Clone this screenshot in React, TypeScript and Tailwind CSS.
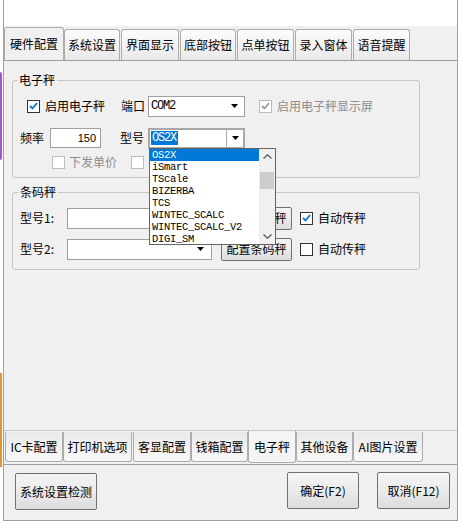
import React from "react";

const mono = "font-['Liberation_Mono',monospace] text-[12px] tracking-[-1.2px]";
const listMono = "font-['Liberation_Mono',monospace] text-[10.5px] tracking-[-0.3px]";

function Arrow() {
  return (
    <svg width="7" height="4" viewBox="0 0 7 4">
      <path d="M0 0h7L3.5 4z" fill="#000" />
    </svg>
  );
}

function Check({ checked, disabled }: { checked?: boolean; disabled?: boolean }) {
  return (
    <span
      className={`flex h-[13px] w-[13px] shrink-0 items-center justify-center border bg-white ${
        disabled ? "border-[#bcbcbc]" : "border-[#333333]"
      }`}
    >
      {checked && (
        <svg width="9" height="8" viewBox="0 0 9 8">
          <path
            d="M1 4l2.5 2.5L8 1"
            fill="none"
            stroke={disabled ? "#9a9a9a" : "#0078d7"}
            strokeWidth="1.8"
          />
        </svg>
      )}
    </span>
  );
}

function TopTab({ label, w, sel, ml }: { label: string; w: string; sel?: boolean; ml?: string }) {
  return (
    <div
      className={`${w} ${ml ?? ""} flex items-center justify-center rounded-t-[3px] border border-b-0 border-[#acacac] ${
        sel ? "h-[33px] bg-[#f0f0f0]" : "h-[31px] bg-gradient-to-b from-[#fcfcfc] to-[#e9e9e9]"
      }`}
    >
      {label}
    </div>
  );
}

function BottomTab({ label, w, sel, ml }: { label: string; w: string; sel?: boolean; ml?: string }) {
  return (
    <div
      className={`${w} ${ml ?? ""} flex items-center justify-center rounded-b-[3px] border border-t-0 border-[#acacac] ${
        sel ? "h-[32px] bg-[#f4f4f4]" : "mt-[1px] h-[30px] bg-gradient-to-t from-[#f8f8f8] to-[#e9e9e9]"
      }`}
    >
      {label}
    </div>
  );
}

function WinButton({ label, w, mt, ml }: { label: React.ReactNode; w: string; mt: string; ml: string }) {
  return (
    <div
      className={`${w} ${mt} ${ml} flex h-[37px] items-center justify-center rounded-[2px] border border-[#707070] bg-gradient-to-b from-[#f4f4f4] via-[#ebebeb] to-[#dcdcdc]`}
    >
      {label}
    </div>
  );
}

const models = ["OS2X", "iSmart", "TScale", "BIZERBA", "TCS", "WINTEC_SCALC", "WINTEC_SCALC_V2", "DIGI_SM"];

export default function App() {
  return (
    <div className="relative flex h-[524px] w-[461px] overflow-hidden bg-white font-['Noto_Sans_CJK_SC',sans-serif] text-[12px] leading-[16px] text-black">
      {/* desktop behind the window */}
      <div className="flex w-[3px] flex-col">
        <div className="h-[72px]" />
        <div className="h-[88px] w-[2px] rounded-r-[2px] bg-[#a456c6]" />
        <div className="h-[213px]" />
        <div className="h-[94px] w-[2px] bg-[#df9634]" />
      </div>

      <div className="flex h-[521px] w-[455px] flex-col border-x border-b border-[#a0a0a0] bg-[#f0f0f0]">
        <div className="h-[26px] bg-white" />

        {/* top tabs */}
        <div className="flex h-[34px] items-end">
          <TopTab label="硬件配置" w="w-[60px]" sel />
          <TopTab label="系统设置" w="w-[56px]" />
          <TopTab label="界面显示" w="w-[58px]" ml="ml-[1px]" />
          <TopTab label="底部按钮" w="w-[56px]" ml="ml-[1px]" />
          <TopTab label="点单按钮" w="w-[57px]" ml="ml-[1px]" />
          <TopTab label="录入窗体" w="w-[57px]" ml="ml-[1px]" />
          <TopTab label="语音提醒" w="w-[57px]" ml="ml-[1px]" />
        </div>

        {/* main page */}
        <div className="h-[371px] border-t border-b border-t-[#a0a0a0] border-b-[#c8c8c8] pl-[8px]">
          <fieldset className="mt-[11px] w-[408px] rounded-[3px] border border-[#c6c6c6] pb-[2px]">
            <legend className="ml-[4px] px-[2px] leading-[16px]">电子秤</legend>
            <div className="mt-[7px] flex h-[22px] items-center">
              <span className="ml-[14px]">
                <Check checked />
              </span>
              <span className="ml-[5px]">启用电子秤</span>
              <span className="ml-[16px]">端口</span>
              <div className={`ml-[3px] flex h-[21px] w-[97px] items-center justify-between border border-[#a0a0a0] bg-white pl-[2px] pr-[6px] ${mono}`}>
                <span>COM2</span>
                <Arrow />
              </div>
              <span className="ml-[14px]">
                <Check checked disabled />
              </span>
              <span className="ml-[5px] text-[#8d8d8d]">启用电子秤显示屏</span>
            </div>
            <div className="mt-[10px] flex h-[22px] items-center">
              <span className="ml-[7px]">频率</span>
              <div className="ml-[6px] flex h-[20px] w-[51px] items-center justify-end border border-[#a0a0a0] bg-white pr-[4px] font-['Liberation_Sans',sans-serif] text-[11px]">
                150
              </div>
              <span className="ml-[19px]">型号</span>
              <div className="relative ml-[4px] flex h-[21px] w-[97px] items-center border-2 border-[#a8a8a8] bg-white">
                <span className={`ml-[1px] bg-[#0078d7] pl-[1px] pr-[2px] leading-[14px] text-white ${mono}`}>OS2X</span>
                <span className="ml-auto flex h-full w-[17px] items-center justify-center border-l border-[#a8a8a8]">
                  <Arrow />
                </span>
                {/* open drop-down list */}
                <div className="absolute left-[-1px] top-[18px] z-10 flex h-[97px] w-[127px] border border-[#646464] bg-white">
                  <div className="flex w-[109px] flex-col">
                    {models.map((m, i) => (
                      <div
                        key={m}
                        className={`h-[12px] pl-[2px] leading-[12px] ${listMono} ${i === 0 ? "bg-[#0078d7] text-white" : ""}`}
                      >
                        {m}
                      </div>
                    ))}
                  </div>
                  <div className="flex w-[16px] flex-col items-center bg-[#f0f0f0]">
                    <svg className="mt-[5px]" width="9" height="5" viewBox="0 0 9 5">
                      <path d="M0.5 4.5L4.5 0.8L8.5 4.5" fill="none" stroke="#606060" strokeWidth="1.4" />
                    </svg>
                    <div className="mt-[13px] h-[17px] w-[14px] bg-[#cdcdcd]" />
                    <svg className="mt-auto mb-[5px]" width="9" height="5" viewBox="0 0 9 5">
                      <path d="M0.5 0.5L4.5 4.2L8.5 0.5" fill="none" stroke="#606060" strokeWidth="1.4" />
                    </svg>
                  </div>
                </div>
              </div>
            </div>
            <div className="flex h-[26px] items-center">
              <span className="ml-[39px]">
                <Check disabled />
              </span>
              <span className="ml-[4px] text-[#8d8d8d]">下发单价</span>
              <span className="ml-[14px]">
                <Check disabled />
              </span>
            </div>
          </fieldset>

          <fieldset className="mt-[6px] w-[408px] rounded-[3px] border border-[#c6c6c6] pb-[9px]">
            <legend className="ml-[5px] px-[2px] leading-[16px]">条码秤</legend>
            <div className="mt-[7px] flex h-[22px] items-center">
              <span className="ml-[7px] w-[47px]">型号1:</span>
              <div className="flex h-[21px] w-[145px] items-center justify-end border border-[#a0a0a0] bg-white pr-[7px]">
                <Arrow />
              </div>
              <WinButton label="配置条码秤" w="w-[71px]" mt="mt-0" ml="ml-[9px] !h-[23px]" />
              <span className="ml-[8px]">
                <Check checked />
              </span>
              <span className="ml-[5px]">自动传秤</span>
            </div>
            <div className="mt-[9px] flex h-[22px] items-center">
              <span className="ml-[7px] w-[47px]">型号2:</span>
              <div className="flex h-[21px] w-[145px] items-center justify-end border border-[#a0a0a0] bg-white pr-[7px]">
                <Arrow />
              </div>
              <WinButton label="配置条码秤" w="w-[71px]" mt="mt-0" ml="ml-[9px] !h-[23px]" />
              <span className="ml-[8px]">
                <Check />
              </span>
              <span className="ml-[5px]">自动传秤</span>
            </div>
          </fieldset>
        </div>

        {/* bottom tabs */}
        <div className="flex h-[33px] items-start pl-[1px]">
          <BottomTab label="IC卡配置" w="w-[58px]" />
          <BottomTab label="打印机选项" w="w-[69px]" />
          <BottomTab label="客显配置" w="w-[58px]" ml="ml-[1px]" />
          <BottomTab label="钱箱配置" w="w-[57px]" />
          <BottomTab label="电子秤" w="w-[48px]" sel />
          <BottomTab label="其他设备" w="w-[57px]" />
          <BottomTab label="AI图片设置" w="w-[70px]" />
        </div>

        {/* button bar */}
        <div className="flex h-[56px] items-start border-t border-[#a0a0a0]">
          <WinButton label="系统设置检测" w="w-[82px]" mt="mt-[8px]" ml="ml-[11px]" />
          <WinButton label="确定(F2)" w="w-[72px]" mt="mt-[7px]" ml="ml-[190px]" />
          <WinButton label="取消(F12)" w="w-[73px]" mt="mt-[7px]" ml="ml-[18px]" />
        </div>
      </div>
    </div>
  );
}
